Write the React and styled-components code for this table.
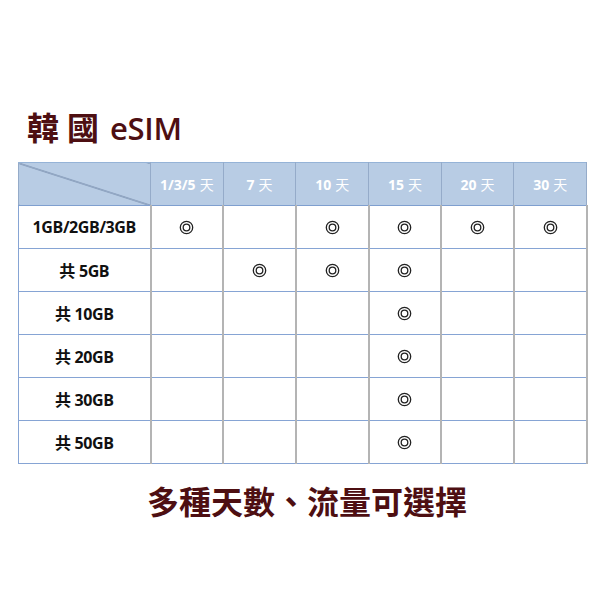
import React from "react";
import styled, { createGlobalStyle } from "styled-components";

const Global = createGlobalStyle`
  html, body { margin: 0; padding: 0; background: #ffffff; }
  body { font-family: "Open Sans", "Noto Sans CJK TC", sans-serif; }
`;

const Page = styled.div`
  width: 604px;
  height: 604px;
  box-sizing: border-box;
  padding: 106px 18px 0 18px;
  display: flex;
  flex-direction: column;
  align-items: flex-start;
`;

const Title = styled.h1`
  margin: 0 0 0 9px;
  height: 56px;
  line-height: 40px;
  font-size: 31px;
  color: #4e0f12;
  display: flex;
  align-items: baseline;
`;

const TitleCJK = styled.span`
  font-family: "Noto Sans CJK TC", sans-serif;
  font-weight: 700;
  font-size: 32px;
  letter-spacing: 8px;
  margin-right: 3px;
`;

const TitleLatin = styled.span`
  font-family: "Open Sans", sans-serif;
  font-weight: 600;
  font-size: 31px;
  letter-spacing: -0.3px;
`;

const Table = styled.table`
  border-collapse: collapse;
  table-layout: fixed;
  width: 568px;
`;

const Col = styled.col`
  width: ${(p) => p.$w}px;
`;

const HeadCell = styled.th`
  height: 42px;
  padding: 0;
  background: #b8cce4;
  border-left: 1px solid #95abc9;
  border-right: 1px solid #95abc9;
  border-top: 1px solid #95b3d7;
  border-bottom: 1px solid #7f9fcf;
  color: #ffffff;
  font-size: 14px;
  font-weight: 700;
  text-align: center;
  vertical-align: middle;
`;

const CornerCell = styled(HeadCell)`
  background:
    linear-gradient(
      to top right,
      transparent calc(50% - 0.8px),
      #5d7396 50%,
      transparent calc(50% + 0.8px)
    ),
    #b8cce4;
`;

const Days = styled.span`
  font-family: "Noto Sans CJK TC", sans-serif;
  font-weight: 400;
  margin-left: 4px;
`;

const Cell = styled.td`
  height: 42px;
  padding: 0;
  border-left: 2px solid #b4b4b4;
  border-right: 2px solid #b4b4b4;
  border-top: 1px solid #86a4d4;
  border-bottom: 1px solid #86a4d4;
  text-align: center;
  vertical-align: middle;
  color: #111;
`;

const LabelCell = styled(Cell)`
  border-left: 1px solid #86a4d4;
  font-size: 16px;
  font-weight: 700;
  letter-spacing: -0.4px;
`;

const Gong = styled.span`
  font-family: "Noto Sans CJK TC", sans-serif;
  font-weight: 700;
  margin-right: 4px;
`;

const MarkSvg = styled.svg`
  display: block;
  margin: 0 auto;
  width: 15px;
  height: 15px;
`;

const Mark = () => (
  <MarkSvg viewBox="0 0 15 15" aria-label="◎">
    <circle cx="7.5" cy="7.5" r="6.2" fill="none" stroke="#222" strokeWidth="1.3" />
    <circle cx="7.5" cy="7.5" r="3.3" fill="none" stroke="#222" strokeWidth="1.3" />
  </MarkSvg>
);

const Footer = styled.p`
  margin: 16px 0 0 0;
  align-self: stretch;
  text-align: center;
  font-family: "Noto Sans CJK TC", sans-serif;
  font-weight: 700;
  font-size: 32px;
  line-height: 40px;
  color: #4e0f12;
  padding-left: 10px;
`;

const days = ["1/3/5", "7", "10", "15", "20", "30"];

const rows = [
  { label: "1GB/2GB/3GB", cjk: false, marks: [1, 0, 1, 1, 1, 1] },
  { label: "5GB", cjk: true, marks: [0, 1, 1, 1, 0, 0] },
  { label: "10GB", cjk: true, marks: [0, 0, 0, 1, 0, 0] },
  { label: "20GB", cjk: true, marks: [0, 0, 0, 1, 0, 0] },
  { label: "30GB", cjk: true, marks: [0, 0, 0, 1, 0, 0] },
  { label: "50GB", cjk: true, marks: [0, 0, 0, 1, 0, 0] },
];

export default function App() {
  return (
    <>
      <Global />
      <Page>
        <Title>
          <TitleCJK>韓國</TitleCJK>
          <TitleLatin>eSIM</TitleLatin>
        </Title>
        <Table>
          <colgroup>
            <Col $w={132} />
            {days.map((d) => (
              <Col key={d} $w={72.7} />
            ))}
          </colgroup>
          <thead>
            <tr>
              <CornerCell />
              {days.map((d) => (
                <HeadCell key={d}>
                  {d}
                  <Days>天</Days>
                </HeadCell>
              ))}
            </tr>
          </thead>
          <tbody>
            {rows.map((r) => (
              <tr key={r.label}>
                <LabelCell>
                  {r.cjk && <Gong>共</Gong>}
                  {r.label}
                </LabelCell>
                {r.marks.map((m, i) => (
                  <Cell key={i}>{m ? <Mark /> : null}</Cell>
                ))}
              </tr>
            ))}
          </tbody>
        </Table>
        <Footer>多種天數、流量可選擇</Footer>
      </Page>
    </>
  );
}
